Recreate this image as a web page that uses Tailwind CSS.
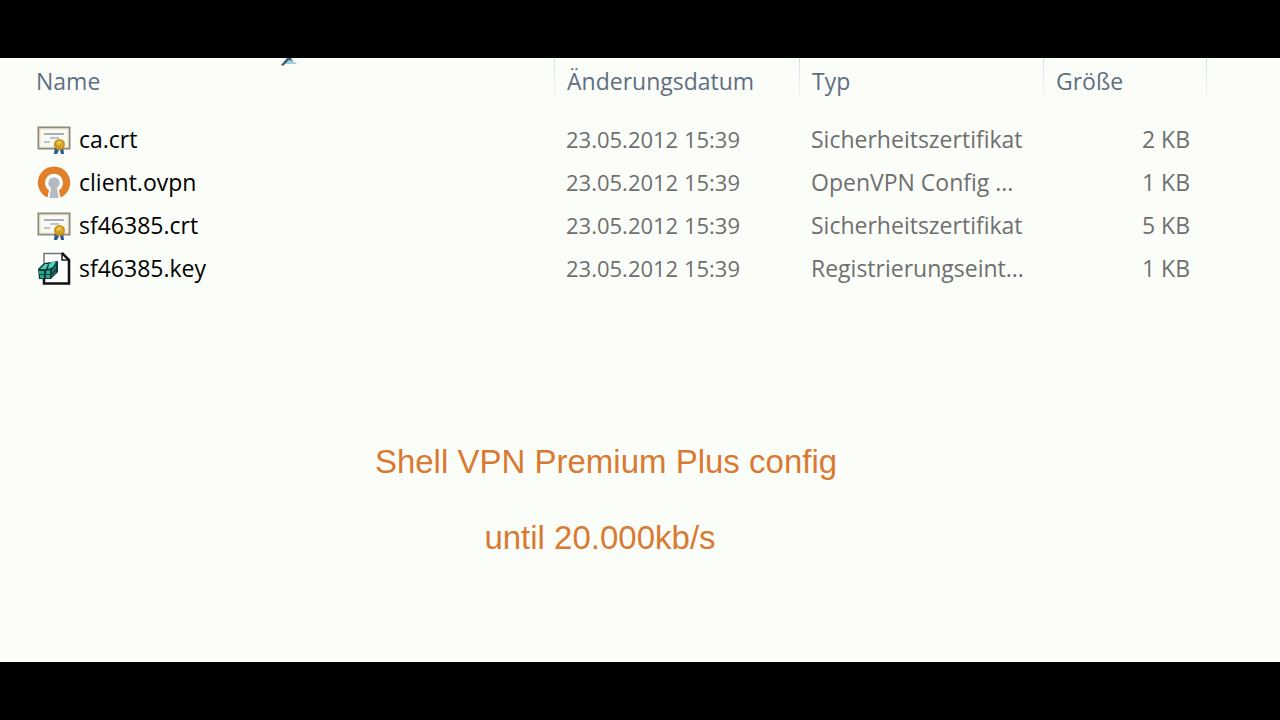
<!DOCTYPE html>
<html lang="de">
<head>
  <meta charset="UTF-8" />
  <meta name="viewport" content="width=device-width, initial-scale=1.0" />
  <title>Shell VPN Config</title>
  <script src="https://cdn.jsdelivr.net/npm/@tailwindcss/browser@4"></script>
  <style>
    body { font-family: 'Open Sans', 'Noto Sans', sans-serif; }
  </style>
</head>
<body class="flex flex-col min-h-screen bg-black">
  <!-- shared icons -->
  <svg class="hidden">
    <symbol id="icon-cert" viewBox="0 0 34 30">
      <rect x="1.5" y="2.5" width="31" height="21" fill="#fbfaf0" stroke="#8f8b7c" stroke-width="2" />
      <rect x="3" y="4" width="28" height="18" fill="none" stroke="#e9e6d0" />
      <path d="M7 9h20" stroke="#8d93ae" stroke-width="1.500" />
      <path d="M13 13h9M7 17h6" stroke="#a9aec4" stroke-width="1.500" />
      <path d="M18 21l-1 8h3l2-4 1-4zM22 21l2 8h3l-1-8z" fill="#28568f" />
      <circle cx="22.500" cy="19.500" r="5.500" fill="#c9941c" />
      <circle cx="22.500" cy="19" r="3" fill="#ecc54b" />
      <path d="M20.500 20l2 1.500 2-3" fill="none" stroke="#a87410" />
    </symbol>
    <symbol id="icon-ovpn" viewBox="0 0 34 34">
      <path d="M10.500 31.500A16.200 16.200 0 1 1 23.500 31.500L22 24.200A9 9 0 1 0 12 24.200Z" fill="#e17f2b" />
      <path d="M17 11.500a5.500 5.500 0 0 1 3 10.200L21.500 32h-9L14 21.700a5.500 5.500 0 0 1 3-10.200z" fill="#b3bac1" />
    </symbol>
    <symbol id="icon-key" viewBox="0 0 34 34">
      <path d="M7 1h18l7 8v23H7z" fill="#fdfdfd" />
      <path d="M7 11V1.500h18" fill="none" stroke="#777" stroke-width="1.500" />
      <path d="M25 1v7h7" fill="none" stroke="#222" stroke-width="1.500" />
      <path d="M25 1l7 7v23.500H7V26" fill="none" stroke="#111" stroke-width="2.500" />
      <path d="M1 17l6-6 14-2v11l-7 7H2z" fill="#0c3b39" />
      <path d="M3 17l5-5 3 0-2 5zM12 12l3-2 4 0-3 5-5 2z" fill="#4fd0b4" />
      <path d="M2 19h5v3H2zM9 19l4-1v4H9zM3 23h4v3H3zM9 23h4v3H9z" fill="#2aa592" />
      <path d="M15 18l4-5v4l-4 4zM15 23l4-4v2l-4 4z" fill="#17736b" />
    </symbol>
  </svg>

  <header class="h-[58px] shrink-0"></header>

  <main class="flex-1 bg-[#fbfdf9]">
    <table class="w-full table-fixed text-[23px] leading-[31px] text-[#6f6f6f]">
      <colgroup>
        <col />
        <col class="w-[245px]" />
        <col class="w-[244px]" />
        <col class="w-[163px]" />
        <col class="w-[74px]" />
      </colgroup>
      <thead class="text-left align-top text-[#5f6f83]">
        <tr>
          <th scope="col" class="relative pb-[21px] pl-9 font-normal">
            <div class="h-[39px] pt-2">Name</div>
            <svg class="absolute top-0 left-[281px] h-2 w-4" viewBox="0 0 16 8">
              <path d="M8 0l8 6H3z" fill="#9fd0e0" />
              <path d="M6 0h4l2 3-4-1-6 6-2-1z" fill="#48606f" />
            </svg>
          </th>
          <th scope="col" class="pb-[21px] font-normal">
            <div class="flex h-[39px]">
              <span class="w-px bg-linear-to-b from-[#d3e2e9] to-[#eef5f6]"></span>
              <span class="pt-2 pl-3">Änderungsdatum</span>
            </div>
          </th>
          <th scope="col" class="pb-[21px] font-normal">
            <div class="flex h-[39px]">
              <span class="w-px bg-linear-to-b from-[#d3e2e9] to-[#eef5f6]"></span>
              <span class="pt-2 pl-3">Typ</span>
            </div>
          </th>
          <th scope="col" class="pb-[21px] font-normal">
            <div class="flex h-[39px]">
              <span class="w-px bg-linear-to-b from-[#d3e2e9] to-[#eef5f6]"></span>
              <span class="pt-2 pl-3">Größe</span>
            </div>
          </th>
          <td>
            <div class="h-[39px] w-px bg-linear-to-b from-[#d3e2e9] to-[#eef5f6]"></div>
          </td>
        </tr>
      </thead>
      <tbody>
        <tr class="h-[43px]">
          <td class="pl-[37px] text-black">
            <div class="flex items-center gap-2">
              <svg class="h-[30px] w-[34px]"><use href="#icon-cert" /></svg>
              <span>ca.crt</span>
            </div>
          </td>
          <td class="pl-3 text-[22px]">23.05.2012 15:39</td>
          <td class="pl-3 whitespace-nowrap">Sicherheitszertifikat</td>
          <td class="pr-4 text-right">2 KB</td>
          <td></td>
        </tr>
        <tr class="h-[43px]">
          <td class="pl-[37px] text-black">
            <div class="flex items-center gap-2">
              <svg class="size-[34px]"><use href="#icon-ovpn" /></svg>
              <span>client.ovpn</span>
            </div>
          </td>
          <td class="pl-3 text-[22px]">23.05.2012 15:39</td>
          <td class="pl-3 whitespace-nowrap">OpenVPN Config ...</td>
          <td class="pr-4 text-right">1 KB</td>
          <td></td>
        </tr>
        <tr class="h-[43px]">
          <td class="pl-[37px] text-black">
            <div class="flex items-center gap-2">
              <svg class="h-[30px] w-[34px]"><use href="#icon-cert" /></svg>
              <span>sf46385.crt</span>
            </div>
          </td>
          <td class="pl-3 text-[22px]">23.05.2012 15:39</td>
          <td class="pl-3 whitespace-nowrap">Sicherheitszertifikat</td>
          <td class="pr-4 text-right">5 KB</td>
          <td></td>
        </tr>
        <tr class="h-[43px]">
          <td class="pl-[37px] text-black">
            <div class="flex items-center gap-2">
              <svg class="size-[34px]"><use href="#icon-key" /></svg>
              <span>sf46385.key</span>
            </div>
          </td>
          <td class="pl-3 text-[22px]">23.05.2012 15:39</td>
          <td class="pl-3 whitespace-nowrap">Registrierungseint...</td>
          <td class="pr-4 text-right">1 KB</td>
          <td></td>
        </tr>
      </tbody>
    </table>

    <section class="flex flex-col gap-9 pt-[152px] pr-[68px] text-center font-['Liberation_Sans',Arial,sans-serif] text-[33px] leading-10 text-[#d97a32]">
      <p>Shell VPN Premium Plus config</p>
      <p class="pr-3">until 20.000kb/s</p>
    </section>
  </main>

  <footer class="h-[58px] shrink-0"></footer>
</body>
</html>
